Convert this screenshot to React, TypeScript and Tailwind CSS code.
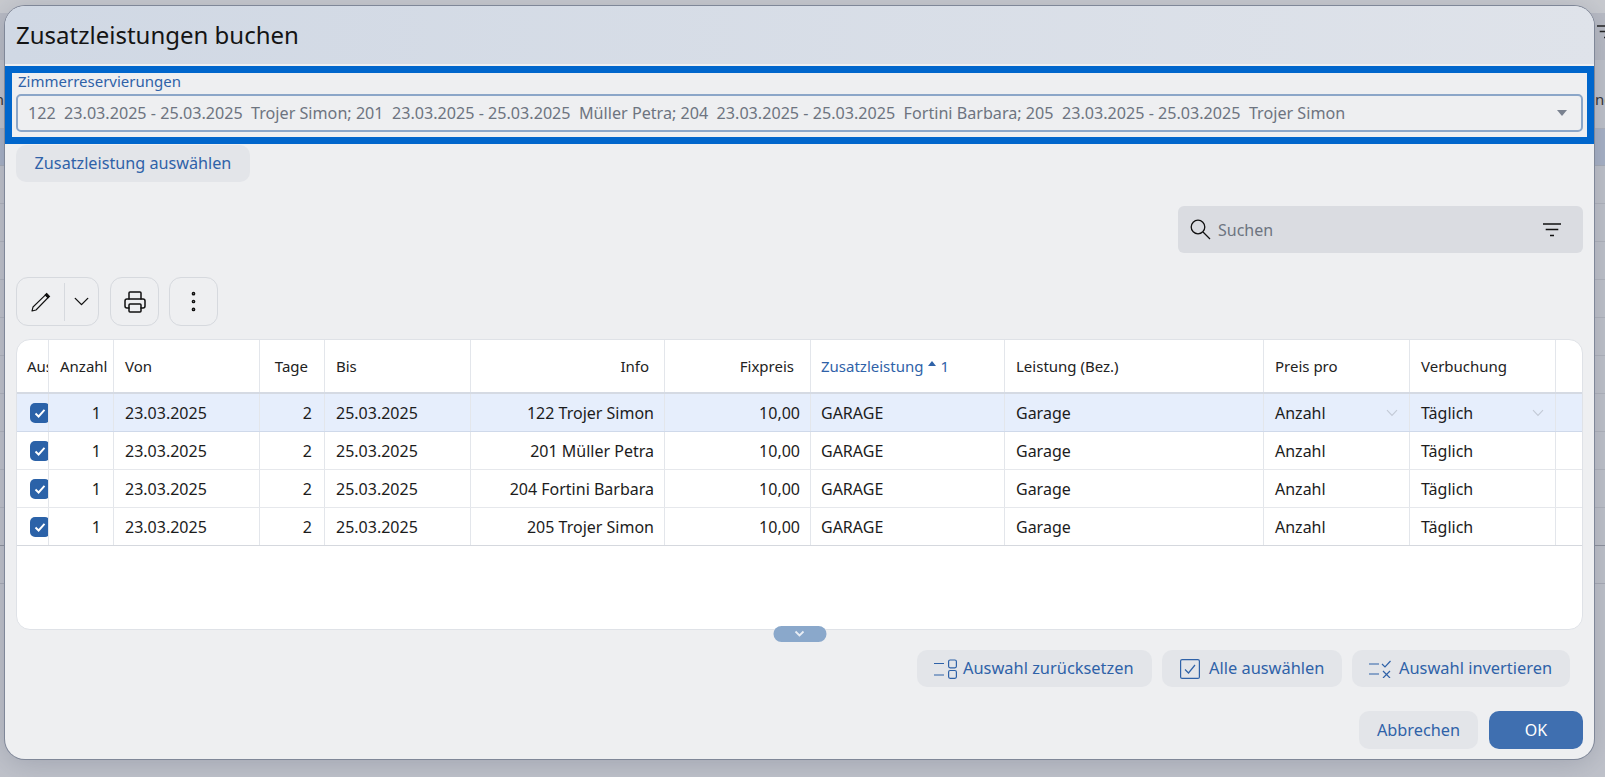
import { ChevronDown, EllipsisVertical, Printer } from "lucide-react";

const cols = "grid-cols-[32px_65px_146px_65px_146px_194px_146px_194px_259px_146px_146px_1fr]";

const rows = [
  { info: "122 Trojer Simon", selected: true },
  { info: "201 Müller Petra", selected: false },
  { info: "204 Fortini Barbara", selected: false },
  { info: "205 Trojer Simon", selected: false },
];

function CheckBox() {
  return (
    <div className="w-[20px] h-[20px] rounded-[5px] bg-[#2b62a8] flex items-center justify-center shrink-0">
      <svg width="14" height="14" viewBox="0 0 14 14" fill="none">
        <path d="M2.5 7.5 5.6 10.5 11.5 3.8" stroke="#fff" strokeWidth="1.9" />
      </svg>
    </div>
  );
}

function FilterIcon({ className }: { className?: string }) {
  return (
    <svg width="18" height="14" viewBox="0 0 18 14" className={className} stroke="currentColor" strokeWidth="1.3">
      <path d="M0 1h18M2.700 6.500h12.600M7 12.500h4" />
    </svg>
  );
}

function Cell({ className, children, right }: { className?: string; children?: React.ReactNode; right?: boolean }) {
  return (
    <div
      className={`h-full border-r border-[#e3e6eb] flex items-center overflow-hidden whitespace-nowrap ${right ? "justify-end" : ""} ${className ?? ""}`}
    >
      {children}
    </div>
  );
}

function SmallChevron() {
  return (
    <svg width="12" height="8" viewBox="0 0 12 8" fill="none" stroke="#c3cad6" strokeWidth="1.1" className="ml-auto mr-[11px]">
      <path d="M1 1.200 6 6.500 11 1.200" />
    </svg>
  );
}

function ActionButton({ icon, label, className }: { icon: React.ReactNode; label: string; className: string }) {
  return (
    <button className={`h-[37px] rounded-[10px] bg-[#e3e5e9] flex items-center text-[16.4px] text-[#2f62a8] whitespace-nowrap ${className}`}>
      {icon}
      {label}
    </button>
  );
}

export default function App() {
  return (
    <div className="relative w-[1605px] h-[777px] overflow-hidden bg-[#c0c3cb] font-['Noto_Sans',sans-serif]">
      {/* page behind the dialog */}
      <div className="flex flex-col h-full">
        <div className="h-[13px] bg-[#c9cbd0]" />
        <div className="h-[47px] bg-[#b9bcc5] flex justify-end items-center pr-0 overflow-hidden">
          <FilterIcon className="text-[#222] shrink-0 -mr-[10px] -mt-[10px]" />
        </div>
        <div className="h-[69px] border-b border-[#aeb2bc] flex items-center justify-between text-[15px] text-[#333] overflow-hidden pt-[11px]">
          <span className="w-[4px] overflow-hidden flex justify-end">n</span>
          <span className="w-[10px] overflow-hidden">ng</span>
        </div>
        <div className="h-[37px] bg-[#a9b3c7] border-b border-[#a8aeb9]" />
        {[205, 242, 280, 317, 355, 393, 431, 469, 506].map((y) => (
          <div key={y} className="h-[38px] border-b border-[#b1b4bd]" />
        ))}
        <div className="h-[38px] border-b border-[#8f939e]" />
        <div className="h-[38px] border-b border-[#a9acb6]" />
      </div>

      {/* dialog */}
      <div className="absolute left-[5px] top-[6px] w-[1589px] h-[753px] rounded-[20px] overflow-hidden bg-[#eeeff1] flex flex-col shadow-[0_0_0_1px_#7f8798,0_4px_30px_rgba(60,66,90,0.25)]">
        <div className="h-[58px] shrink-0 bg-gradient-to-r from-[#d0d8e4] to-[#dfe3ea] flex items-center pl-[11px] text-[24px] leading-none text-[#141414]">
          Zusatzleistungen buchen
        </div>
        <div className="mt-[2px] h-[78px] shrink-0 border-[7px] border-[#0066cc] px-[4px] flex flex-col">
          <div className="h-[21px] pl-[2px] text-[15px] leading-[16px] text-[#2f62a8]">Zimmerreservierungen</div>
          <div className="h-[38px] rounded-[5px] border-2 border-[#8ba6c8] flex items-center pl-[10px] text-[16.15px] text-[#6d7480] whitespace-pre">
            122  23.03.2025 - 25.03.2025  Trojer Simon; 201  23.03.2025 - 25.03.2025  Müller Petra; 204  23.03.2025 - 25.03.2025  Fortini Barbara; 205  23.03.2025 - 25.03.2025  Trojer Simon
            <svg width="10" height="6" viewBox="0 0 10 6" className="ml-auto mr-[14px]">
              <path d="M0 0h10L5 6z" fill="#7a8290" />
            </svg>
          </div>
        </div>

        <div className="px-[11px] flex flex-col">
          <button className="mt-px w-[234px] h-[37px] rounded-[10px] bg-[#e3e5e9] text-[16.2px] text-[#2f62a8]">
            Zusatzleistung auswählen
          </button>

          <div className="mt-[24px] ml-auto w-[405px] h-[47px] rounded-[6px] bg-[#dadce1] flex items-center pl-[12px] pr-[22px]">
            <svg width="22" height="22" viewBox="0 0 22 22" fill="none" stroke="#111" strokeWidth="1.300">
              <circle cx="8" cy="8" r="6.800" />
              <path d="M13 13 20 20" />
            </svg>
            <span className="ml-[6px] text-[16px] text-[#6d7480]">Suchen</span>
            <FilterIcon className="ml-auto text-[#111]" />
          </div>

          <div className="mt-[24px] flex gap-[11px] h-[49px]">
            <div className="w-[83px] rounded-[12px] border border-[#d6d9de] flex items-center">
              <div className="w-[47px] flex justify-center">
                <svg width="20" height="20" viewBox="0 0 20 20" fill="none" stroke="#111" strokeWidth="1.100">
                  <path d="M1 19 2 15 14.500 2.800 17.200 5.500 5 18Z" strokeLinejoin="round" />
                  <path d="M15.600 1.500 18.500 4.400 17 5.800 14.200 3Z" fill="#111" />
                </svg>
              </div>
              <div className="w-px h-[38px] bg-[#d6d9de]" />
              <div className="flex-1 flex justify-center">
                <ChevronDown size={25} strokeWidth={1.3} className="text-[#111]" />
              </div>
            </div>
            <div className="w-[49px] rounded-[12px] border border-[#d6d9de] flex items-center justify-center">
              <Printer size={24} strokeWidth={1.5} className="text-[#111]" />
            </div>
            <div className="w-[49px] -ml-px rounded-[12px] border border-[#d6d9de] flex items-center justify-center">
              <EllipsisVertical size={27} strokeWidth={1.3} className="text-[#111]" />
            </div>
          </div>

          {/* table */}
          <div className="relative mt-[13px] h-[291px]">
            <div className="h-full rounded-[14px] border border-[#dfe2e7] bg-white overflow-hidden">
              <div className={`grid ${cols} h-[54px] items-center text-[15px] text-[#222] border-b-2 border-[#d5dae3]`}>
                <Cell className="pl-[10px]">Aus</Cell>
                <Cell className="pl-[11px]">Anzahl</Cell>
                <Cell className="pl-[11px]">Von</Cell>
                <Cell right className="pr-[16px]">Tage</Cell>
                <Cell className="pl-[11px]">Bis</Cell>
                <Cell right className="pr-[15px]">Info</Cell>
                <Cell right className="pr-[16px]">Fixpreis</Cell>
                <Cell className="pl-[10px] text-[#2f62a8]">
                  Zusatzleistung
                  <svg width="8" height="5" viewBox="0 0 8 5" className="ml-[5px] mr-[4px] -mt-[5px]">
                    <path d="M0 5h8L4 0z" fill="#2f62a8" />
                  </svg>
                  1
                </Cell>
                <Cell className="pl-[11px]">Leistung (Bez.)</Cell>
                <Cell className="pl-[11px]">Preis pro</Cell>
                <Cell className="pl-[11px]">Verbuchung</Cell>
                <div />
              </div>
              {rows.map((r, i) => (
                <div
                  key={r.info}
                  className={`grid ${cols} h-[38px] text-[16px] text-[#1c1c1c] border-b ${
                    r.selected ? "bg-[#e6eefc] border-[#cfd9ea]" : i === 3 ? "border-[#d5d8de]" : "border-[#e6e8ec]"
                  }`}
                >
                  <Cell className="pl-[13px]">
                    <CheckBox />
                  </Cell>
                  <Cell right className="pr-[12px]">1</Cell>
                  <Cell className="pl-[11px]">23.03.2025</Cell>
                  <Cell right className="pr-[12px]">2</Cell>
                  <Cell className="pl-[11px]">25.03.2025</Cell>
                  <Cell right className="pr-[10px]">{r.info}</Cell>
                  <Cell right className="pr-[10px]">10,00</Cell>
                  <Cell className="pl-[10px]">GARAGE</Cell>
                  <Cell className="pl-[11px]">Garage</Cell>
                  <Cell className="pl-[11px]">
                    Anzahl
                    {r.selected && <SmallChevron />}
                  </Cell>
                  <Cell className="pl-[11px]">
                    Täglich
                    {r.selected && <SmallChevron />}
                  </Cell>
                  <div />
                </div>
              ))}
            </div>
            <div className="absolute left-1/2 -translate-x-1/2 -bottom-[12px] w-[53px] h-[16px] rounded-full bg-[#8aa8cb] flex items-center justify-center">
              <svg width="12" height="8" viewBox="0 0 12 8" fill="none" stroke="#e8edf4" strokeWidth="1.800">
                <path d="M2 1.500 6 5.500 10 1.500" />
              </svg>
            </div>
          </div>

          <div className="mt-[20px] flex justify-end gap-[10px] pr-[13px]">
            <ActionButton
              className="pl-[17px] w-[235px]"
              label="Auswahl zurücksetzen"
              icon={
                <svg width="23" height="20" viewBox="0 0 23 20" fill="none" stroke="currentColor" strokeWidth="1.200" className="mr-[6px]">
                  <path d="M0 4.500h10M0 16h10" />
                  <rect x="14.600" y="1" width="7.800" height="7.800" rx="1.500" />
                  <rect x="14.600" y="11.500" width="7.800" height="7.800" rx="1.500" />
                </svg>
              }
            />
            <ActionButton
              className="pl-[18px] w-[180px]"
              label="Alle auswählen"
              icon={
                <svg width="20" height="20" viewBox="0 0 20 20" fill="none" stroke="currentColor" strokeWidth="1.200" className="mr-[9px]">
                  <rect x="0.600" y="0.600" width="18.800" height="18.800" rx="1.500" />
                  <path d="M5 10.500 8.500 14 15 6" />
                </svg>
              }
            />
            <ActionButton
              className="pl-[17px] w-[218px]"
              label="Auswahl invertieren"
              icon={
                <svg width="22" height="18" viewBox="0 0 22 18" fill="none" stroke="currentColor" strokeWidth="1.200" className="mr-[8px]">
                  <path d="M0 4h10M0 14h10" />
                  <path d="M13 4 16 7 21.500 1" />
                  <path d="M14 11 21 18M21 11 14 18" />
                </svg>
              }
            />
          </div>

          <div className="mt-[24px] flex justify-end gap-[11px]">
            <button className="w-[119px] h-[38px] rounded-[10px] bg-[#e3e5e9] text-[16.3px] text-[#2f62a8]">Abbrechen</button>
            <button className="w-[94px] h-[38px] rounded-[10px] bg-[#3f6fb0] text-[16px] text-white">OK</button>
          </div>
        </div>
      </div>
    </div>
  );
}
